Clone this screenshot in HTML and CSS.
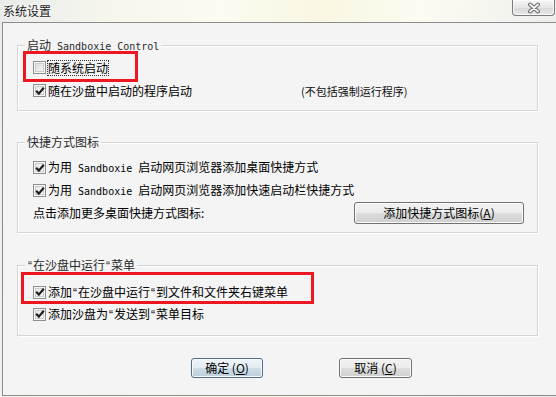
FILE: index.html
```html
<!DOCTYPE html>
<html lang="zh-CN">
<head>
<meta charset="utf-8">
<title>系统设置</title>
<link rel="stylesheet" href="styles.css">
</head>
<body>
<div class="titlebar">
  <span class="title">系统设置</span>
  <div class="close">
    <svg width="16" height="12" viewBox="0 0 16 12">
      <path d="M4 2.5 L12 9.5 M12 2.5 L4 9.5" stroke="#6f6f6f" stroke-width="4" stroke-linecap="round" fill="none"/>
      <path d="M4 2.5 L12 9.5 M12 2.5 L4 9.5" stroke="#f4f4f4" stroke-width="1.8" stroke-linecap="round" fill="none"/>
    </svg>
  </div>
</div>
<div class="client">
  <div class="group g1">
    <div class="legend">启动<span class="mono"> Sandboxie Control</span></div>
    <div class="row"><span class="cb"></span><span class="label focus">随系统启动</span></div>
    <div class="row"><span class="cb checked"><svg width="10" height="10" viewBox="0 0 10 10"><path d="M1.2 4.8 L3.8 7.6 L8.8 1.8" stroke="#1e1e1e" stroke-width="2.2" fill="none"/></svg></span><span class="label">随在沙盘中启动的程序启动</span><span class="note">(不包括强制运行程序)</span></div>
    <div class="hl hl1"></div>
  </div>
  <div class="group g2">
    <div class="legend">快捷方式图标</div>
    <div class="row"><span class="cb checked"><svg width="10" height="10" viewBox="0 0 10 10"><path d="M1.2 4.8 L3.8 7.6 L8.8 1.8" stroke="#1e1e1e" stroke-width="2.2" fill="none"/></svg></span><span class="label">为用<span class="mono"> Sandboxie </span>启动网页浏览器添加桌面快捷方式</span></div>
    <div class="row"><span class="cb checked"><svg width="10" height="10" viewBox="0 0 10 10"><path d="M1.2 4.8 L3.8 7.6 L8.8 1.8" stroke="#1e1e1e" stroke-width="2.2" fill="none"/></svg></span><span class="label">为用<span class="mono"> Sandboxie </span>启动网页浏览器添加快速启动栏快捷方式</span></div>
    <div class="row row-btn"><span class="plain">点击添加更多桌面快捷方式图标:</span><button class="btn btn-wide">添加快捷方式图标(<u>A</u>)</button></div>
  </div>
  <div class="group g3">
    <div class="legend"><span class="q">“</span>在沙盘中运行<span class="q">“</span>菜单</div>
    <div class="row"><span class="cb checked"><svg width="10" height="10" viewBox="0 0 10 10"><path d="M1.2 4.8 L3.8 7.6 L8.8 1.8" stroke="#1e1e1e" stroke-width="2.2" fill="none"/></svg></span><span class="label">添加<span class="q">“</span>在沙盘中运行<span class="q">“</span>到文件和文件夹右键菜单</span></div>
    <div class="row"><span class="cb checked"><svg width="10" height="10" viewBox="0 0 10 10"><path d="M1.2 4.8 L3.8 7.6 L8.8 1.8" stroke="#1e1e1e" stroke-width="2.2" fill="none"/></svg></span><span class="label">添加沙盘为<span class="q">“</span>发送到<span class="q">“</span>菜单目标</span></div>
    <div class="hl hl2"></div>
  </div>
  <div class="buttons">
    <button class="btn btn-default">确定 (<u>O</u>)</button>
    <button class="btn btn-cancel">取消 (<u>C</u>)</button>
  </div>
</div>
</body>
</html>
```
FILE: styles.css
```css
* { box-sizing: border-box; }
html, body { margin: 0; padding: 0; }
body {
  width: 556px;
  height: 397px;
  overflow: hidden;
  font-family: "Noto Sans CJK SC", "Noto Sans", sans-serif;
  font-size: 12px;
  color: #000;
  background: linear-gradient(100deg, #e8ebe9 0%, #f6f6ec 18%, #fbfbf1 35%, #f9f7e2 52%, #fcfbf2 68%, #f1f2ee 85%, #e6e8e7 100%);
}
.titlebar {
  height: 22px;
  display: flex;
  justify-content: space-between;
  align-items: flex-start;
}
.title {
  padding-left: 3px;
  line-height: 22px;
  font-size: 12px;
  color: #1a1a1a;
  text-shadow: 0 0 5px #fff, 0 0 3px #fff;
}
.close {
  width: 43px;
  height: 16px;
  margin-right: 1px;
  border: 1px solid #7a7a7a;
  border-top: none;
  border-radius: 0 0 4px 4px;
  background: linear-gradient(#f6f6f6, #e6e6e6 50%, #d8d8d8 51%, #e8e8e8);
  box-shadow: inset 0 0 0 1px rgba(255,255,255,0.75);
  display: flex;
  align-items: center;
  justify-content: center;
}
.client {
  margin-left: 2px;
  height: 374px;
  border: 1px solid #8c8c8c;
  border-right: none;
  background: #f4f4f4;
  padding-top: 22px;
  padding-left: 14px;
}
.group {
  position: relative;
  width: 521px;
  border: 1px solid #d5d5d5;
  box-shadow: 1px 1px 0 #fff, inset 1px 1px 0 #fff;
  padding: 0 13px 0 15px;
}
.g1 { height: 66px; padding-top: 10px; }
.g2 { height: 91px; margin-top: 31px; padding-top: 13px; }
.g3 { height: 71px; margin-top: 32px; padding-top: 15px; }
.legend {
  position: absolute;
  top: -8px;
  left: 7px;
  padding: 0 2px;
  line-height: 14px;
  background: #f4f4f4;
  color: #2a2a2a;
  white-space: pre;
}
.mono {
  font-family: "DejaVu Sans Mono", "Liberation Mono", monospace;
  font-size: 10px;
  white-space: pre;
}
.q {
  font-family: "Liberation Sans", sans-serif;
  font-size: 12px;
  display: inline-block;
  width: 6px;
  text-align: center;
}
.row {
  display: flex;
  align-items: center;
  height: 23px;
  white-space: nowrap;
}
.g3 .row { height: 22px; }
.row-btn {
  height: 22px;
  justify-content: space-between;
}
.cb {
  width: 13px;
  height: 13px;
  flex: none;
  margin-right: 2px;
  border: 1px solid #8e8f8f;
  background: linear-gradient(135deg, #d9dadb, #f8f8f8);
  box-shadow: inset 0 0 0 1px #f7f7f7, inset 0 0 0 2px #c9cbcd;
  display: flex;
  align-items: center;
  justify-content: center;
}
.cb.checked {
  background: linear-gradient(135deg, #e4e5e6, #fbfbfb);
}
.label { line-height: 14px; }
.focus {
  outline: 1px dotted #333;
  outline-offset: 0;
}
.note {
  margin-left: 109px;
  font-size: 11px;
  color: #111;
}
.plain { line-height: 14px; }
.btn {
  font-family: "Noto Sans CJK SC", "Noto Sans", sans-serif;
  font-size: 12px;
  color: #000;
  height: 20px;
  padding: 0;
  border: 1px solid #707070;
  border-radius: 3px;
  background: linear-gradient(#f2f2f2 0%, #ebebeb 50%, #dddddd 51%, #cfcfcf 100%);
  box-shadow: inset 0 0 0 1px #fbfbfb;
  line-height: 16px;
}
.btn u { text-underline-offset: 1px; }
.btn-wide { width: 170px; height: 22px; }
.buttons {
  display: flex;
  gap: 76px;
  margin-top: 22px;
  padding-left: 174px;
}
.btn-default {
  width: 72px;
  border-color: #4a6f8e;
  background: linear-gradient(#eef4f8 0%, #e3ecf2 50%, #cfdde7 51%, #bccfdc 100%);
}
.btn-cancel { width: 73px; }
.hl {
  position: absolute;
  border: 3px solid #ee1620;
}
.hl1 { left: 5px; top: 5px; width: 115px; height: 31px; }
.hl2 { left: 3px; top: 6px; width: 293px; height: 32px; }
```
